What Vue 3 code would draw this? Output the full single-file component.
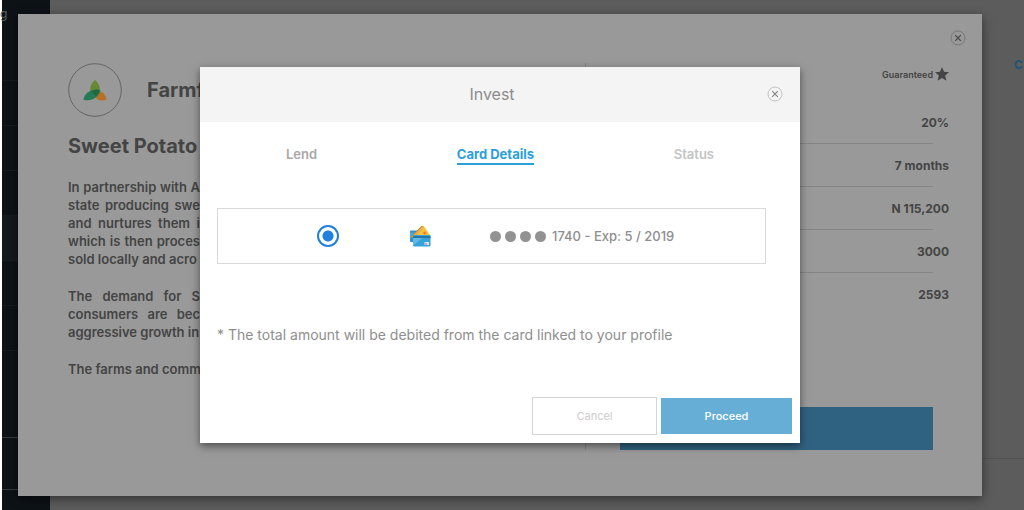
<script setup>
import { ref } from 'vue'

const method = ref('card')
const navItems = ['', '', '', '', 'active', '', '', 'tall', 'strong', 'strong last']
const stats = ['20%', '7 months', 'N 115,200', '3000', '2593']
const paragraphs = [
  ['In partnership with A', 'state producing swe', 'and nurtures them i', 'which is then proces', 'sold locally and acro'],
  ['The demand for S', 'consumers are bec', 'aggressive growth in'],
  ['The farms and comm'],
]
</script>

<template>
  <div class="page">
    <nav class="sidebar">
      <a href="#" class="brand">g</a>
      <a v-for="(kind, i) in navItems" :key="i" href="#" class="nav-item" :class="kind" tabindex="-1"></a>
    </nav>
    <main class="backdrop">
      <a href="#" class="more">C</a>
      <hr class="rule" />
    </main>

    <div class="layer">
      <article class="panel">
        <button class="close panel-close" aria-label="Close project">
          <svg viewBox="0 0 16 16"><circle cx="8" cy="8" r="7" /><path d="M5.2 5.2l5.6 5.6M10.8 5.2l-5.6 5.6" /></svg>
        </button>
        <section class="about">
          <header class="company">
            <svg class="logo" viewBox="0 0 54 54">
              <circle cx="27" cy="27" r="26.3" fill="none" stroke="#656565" stroke-width="1" />
              <path d="M27 17c-4.800 4-6 9-3.600 13.500h7.200C33 26 31.800 21 27 17z" fill="#668936" />
              <path d="M28 28c5.500-.5 9.500 3 10.500 8.500-5 2.200-10 .5-13-4z" fill="#b86f26" />
              <path d="M15.500 36.800c.5-7 9-12 17-9.800-1.500 7-8.500 12-17 9.800z" fill="#267b56" />
              <path d="M23.300 28.600c3-1.700 6-2.200 8-1.700l-.6 3.200-3 3z" fill="#20683f" />
            </svg>
            <h1>Farmf</h1>
          </header>
          <h2>Sweet Potato</h2>
          <p v-for="(lines, i) in paragraphs" :key="i">
            <span v-for="line in lines" :key="line">{{ line }}</span>
          </p>
        </section>
        <section class="facts">
          <div class="guaranteed">
            Guaranteed
            <svg viewBox="0 0 14 14"><path d="M7 0l2 4.700 5 .5-3.800 3.400 1.200 5.100L7 11l-4.400 2.700 1.200-5.100L0 5.200l5-.5z" /></svg>
          </div>
          <ul>
            <li v-for="s in stats" :key="s"><span>{{ s }}</span></li>
          </ul>
          <button class="invest" aria-label="Invest in project"></button>
        </section>
      </article>
    </div>

    <div class="layer">
      <section class="modal" role="dialog" aria-labelledby="modal-title">
        <header class="modal-head">
          <h3 id="modal-title">Invest</h3>
          <button class="close" aria-label="Close">
            <svg viewBox="0 0 16 16"><circle cx="8" cy="8" r="7" /><path d="M5.200 5.200l5.600 5.600M10.800 5.200l-5.600 5.600" /></svg>
          </button>
        </header>
        <nav class="tabs">
          <a href="#">Lend</a>
          <a href="#" class="current">Card Details</a>
          <a href="#" class="next">Status</a>
        </nav>
        <label class="card">
          <input v-model="method" type="radio" name="method" value="card" />
          <svg class="cards" viewBox="0 0 22 22">
            <path d="M1 6.500q0-1 1-1h12v11H2q-1 0-1-1z" fill="#2e93cf" />
            <path d="M1 13L13 1q1-.7 2 .3l6 8.700-7 6H4z" fill="#f3c43b" />
            <path d="M1 12.500L12.500 1l2 1L3.500 15z" fill="#d08a2a" />
            <path d="M3 12L13.600 1.700l.9.900L4 13z" fill="#efb864" />
            <path d="M14 7.500l2-1.200 1.600 2-2.300 1.500z" fill="#ee7a35" />
            <path d="M1 7.500h4.500L1 12.500z" fill="#4aa9dc" />
            <path d="M1 13l3-1v5H2q-1 0-1-1z" fill="#2e93cf" />
            <rect x="4" y="10" width="17.500" height="11.500" rx="1" fill="#35a2dc" />
            <path d="M4 20.500L14 12.500h-10z" fill="#62b9e3" />
            <path d="M4 11h17.500v2H4z" fill="#2478a8" />
            <rect x="15.500" y="17" width="4.500" height="3" fill="#d9e4ee" />
            <path d="M16 18.500h2v1h-2z" fill="#d45b68" />
          </svg>
          <span class="number"><i v-for="n in 4" :key="n"></i><b>1740 - Exp: 5 / 2019</b></span>
        </label>
        <p class="note">* The total amount will be debited from the card linked to your profile</p>
        <footer>
          <button class="cancel">Cancel</button>
          <button class="proceed">Proceed</button>
        </footer>
      </section>
    </div>
  </div>
</template>

<style>
body { margin: 0; background: #fff; }
</style>

<style scoped>
* { box-sizing: border-box; }
.page {
  position: relative;
  display: flex;
  min-height: 100vh;
  overflow: hidden;
  font-family: Inter, "Open Sans", sans-serif;
  color: #444;
}
h1, h2, h3, p, ul { margin: 0; padding: 0; }
a { color: inherit; text-decoration: none; }
button { font: inherit; padding: 0; border: 0; background: none; }

.sidebar { width: 50px; background: linear-gradient(to right, #fff 2px, #0d1217 2px); }
.brand { display: block; height: 36px; padding-top: 6px; font-size: 12px; line-height: 16px; color: #5c6064; }
.nav-item { display: block; height: 45px; margin-left: 2px; border-bottom: 1px solid #171c21; }
.nav-item.active { background: #14191e; }
.nav-item.tall { height: 43px; border: 0; }
.nav-item.strong { height: 44px; border-color: #353a3e; }
.nav-item.last { height: 52px; }

.backdrop { flex: 1; display: flex; flex-direction: column; align-items: flex-end; background: #5c5c5c; }
.more { margin: 56px 0 0; width: 10px; font-size: 12px; line-height: 18px; font-weight: 700; color: #1d5473; }
.rule { width: 100%; margin: 384px 0 0; border: 0; border-top: 1px solid #525252; }

.layer { position: absolute; inset: 0 24px 0 0; display: flex; justify-content: center; align-items: flex-start; pointer-events: none; }
.panel, .modal { pointer-events: auto; }
.panel {
  position: relative;
  display: flex;
  width: calc(100% - 36px);
  min-height: 482px;
  margin-top: 14px;
  padding: 49px 33px 46px 50px;
  background: #999;
  box-shadow: 0 3px 10px rgba(0, 0, 0, .45);
}
.close { display: block; width: 16px; height: 16px; }
.close svg { display: block; width: 16px; height: 16px; fill: none; stroke: #c2c2c2; }
.close path { stroke: #858585; stroke-width: 1.2; }
.panel-close { position: absolute; top: 16px; right: 16px; }
.panel-close svg { stroke: #777; }
.panel-close path { stroke: #444; }

.about { flex: 1; border-right: 1px solid #858585; }
.company { display: flex; align-items: center; gap: 25px; }
.logo { width: 54px; height: 54px; }
h1 { font-size: 20px; line-height: 24px; font-weight: 700; }
h2 { margin: 17px 0 20px; font-size: 20px; line-height: 24px; font-weight: 700; }
.about p { width: 132px; margin-bottom: 19px; font-size: 13px; line-height: 18px; font-weight: 600; }
.about span { display: block; white-space: nowrap; text-align: justify; text-align-last: justify; }
.about span:last-child { text-align-last: left; }

.facts { width: 363px; padding-left: 34px; display: flex; flex-direction: column; }
.guaranteed { display: flex; justify-content: flex-end; align-items: center; gap: 2px; height: 22px; font-size: 9px; font-weight: 600; }
.guaranteed svg { width: 14px; height: 14px; fill: #444; }
ul { margin: 16px 16px 0 0; list-style: none; }
li { height: 43px; border-bottom: 1px solid #858585; text-align: right; font-size: 12px; line-height: 43px; font-weight: 700; }
li:last-child { border: 0; }
li span { margin-right: -16px; }
.invest { height: 43px; margin: auto 16px 0 0; background: #2f6280; }

.modal { width: 600px; margin-top: 67px; background: #fff; box-shadow: 0 3px 8px rgba(0, 0, 0, .5); }
.modal-head { display: grid; grid-template-columns: 16px 1fr 16px; align-items: center; height: 55px; padding: 0 17px 2px; background: #f4f4f4; }
h3 { grid-column: 2; text-align: center; font-size: 16px; line-height: 20px; font-weight: 400; color: #8c8c8c; padding-right: 16px; }
.tabs { display: flex; justify-content: space-between; padding: 23px 86px 0; font-size: 13px; line-height: 18px; font-weight: 600; color: #a8a8a8; }
.tabs .current { color: #2b9fdc; border-bottom: 2px solid #2b9fdc; font-weight: 700; }
.tabs .next { color: #c4c4c4; }
.card { display: flex; align-items: center; height: 56px; margin: 43px 34px 0 17px; padding-left: 99px; border: 1px solid #d8d8d8; }
.card input { appearance: none; width: 22px; height: 22px; margin: 0; border: 2px solid #1f80dd; border-radius: 50%; background: radial-gradient(circle, #1f80dd 5px, transparent 6px); }
.cards { width: 22px; height: 22px; margin-left: 70px; }
.number { display: flex; align-items: center; gap: 4px; margin-left: 59px; color: #8e8e8e; }
.number i { width: 11px; height: 11px; border-radius: 50%; background: #929292; }
.number b { margin-left: 2px; font-size: 13px; line-height: 20px; font-weight: 500; }
.note { margin: 61px 17px 0; font-size: 14px; line-height: 20px; color: #8e8e8e; }
footer { display: flex; justify-content: flex-end; align-items: center; gap: 4px; padding: 52px 8px 8px; font-size: 11px; }
.cancel { width: 125px; height: 38px; border: 1px solid #d4d4d4; color: #ccc; }
.proceed { width: 131px; height: 36px; background: #67aed7; color: #fff; font-weight: 500; }
</style>
